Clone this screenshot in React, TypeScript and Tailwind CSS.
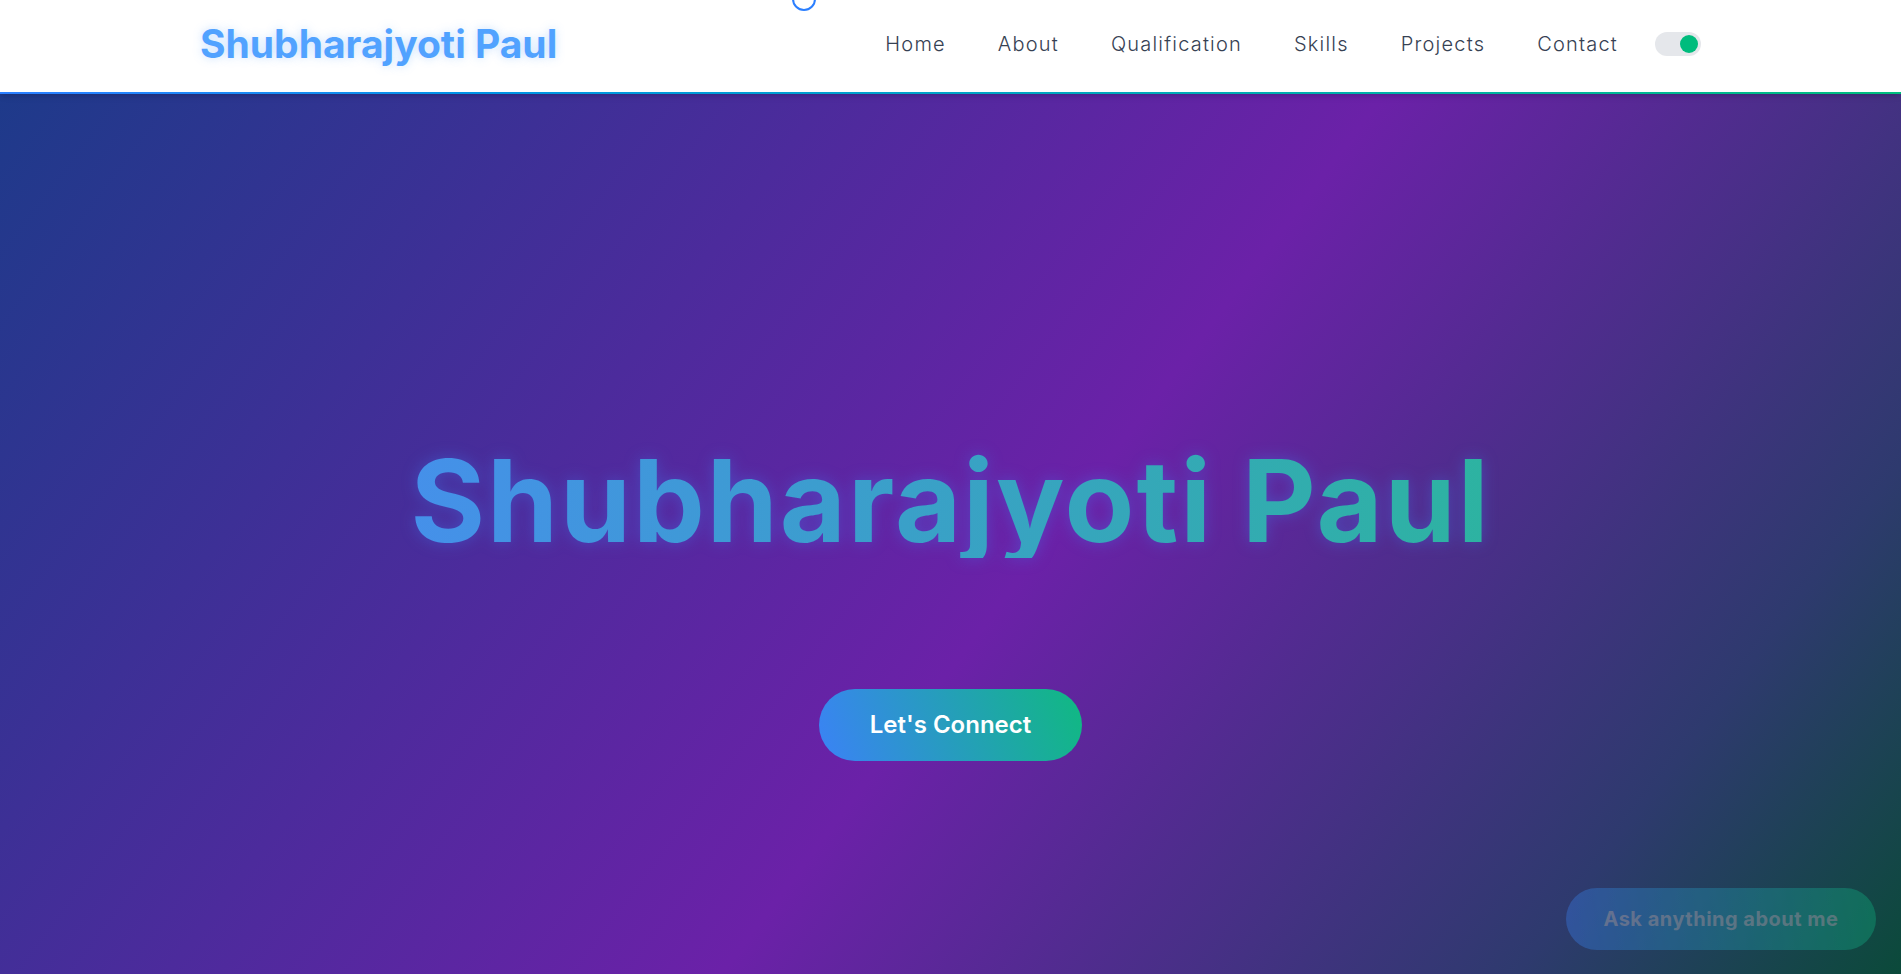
import { useState } from "react";

const links = ["Home", "About", "Qualification", "Skills", "Projects", "Contact"];

export default function App() {
  const [dark, setDark] = useState(true);

  return (
    <div className="relative h-screen flex flex-col overflow-hidden font-['Inter','Noto_Sans',sans-serif]">
      {/* custom cursor ring */}
      <div className="pointer-events-none fixed left-[792px] top-[-13px] z-50 h-6 w-6 rounded-full border-2 border-blue-500" />

      <header className="relative z-10 bg-white shadow-md">
        <div className="mx-auto flex h-[92px] w-[1501px] items-center justify-between pb-1">
          <a className="text-[39px] font-bold text-blue-400 [text-shadow:0_0_10px_rgba(96,165,250,0.35)]">
            Shubharajyoti Paul
          </a>
          <nav className="flex items-center">
            <ul className="flex items-center gap-[52px]">
              {links.map((l) => (
                <li key={l} className="text-[20px] font-light tracking-[1.2px] text-gray-700">
                  {l}
                </li>
              ))}
            </ul>
            <button
              onClick={() => setDark(!dark)}
              className="ml-[37px] flex h-6 w-[46px] items-center rounded-full bg-gray-200 px-[3px]"
            >
              <span
                className={
                  dark
                    ? "ml-auto h-[18px] w-[18px] rounded-full bg-emerald-500"
                    : "h-[18px] w-[18px] rounded-full bg-emerald-500"
                }
              />
            </button>
          </nav>
        </div>
        <div className="h-[2px] bg-gradient-to-r from-blue-500 to-emerald-500" />
      </header>

      <main className="flex flex-1 flex-col items-center bg-[linear-gradient(127deg,#1e3a8a_0%,#6b21a8_54%,#2e3a6e_85%,#0b4a3a_100%)] pt-[350px]">
        <h1 className="bg-[linear-gradient(90deg,#4590ea,#2db3a1)] bg-clip-text text-[114px] font-bold leading-none tracking-[2px] text-transparent drop-shadow-[0_0_8px_rgba(59,130,246,0.35)]">
          Shubharajyoti Paul
        </h1>
        <button className="mt-[131px] h-[72px] w-[263px] rounded-full bg-[linear-gradient(70deg,#3b82f6,#10b981)] text-[24px] font-semibold text-white">
          Let's Connect
        </button>
      </main>

      <button className="fixed bottom-6 right-[25px] h-[62px] w-[310px] rounded-full bg-[linear-gradient(80deg,#3b82f6,#10b981)] text-[20px] font-bold tracking-[0.5px] text-gray-300 opacity-[0.35]">
        Ask anything about me
      </button>
    </div>
  );
}
